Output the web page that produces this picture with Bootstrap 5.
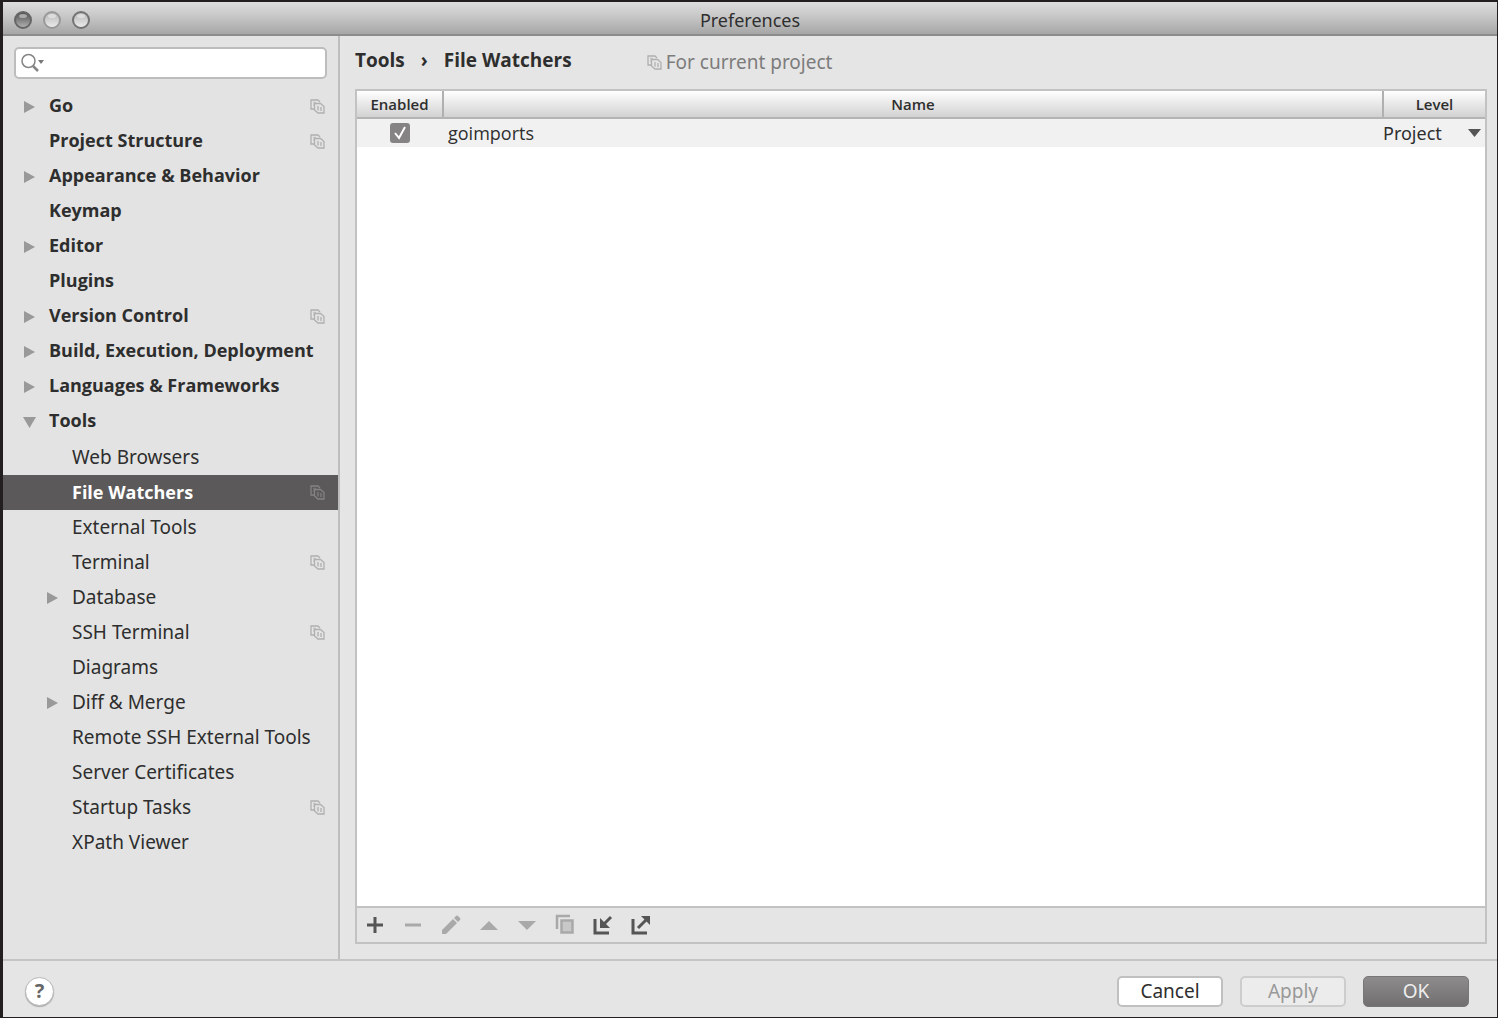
<!DOCTYPE html>
<html lang="en">
<head>
<meta charset="utf-8">
<meta name="viewport" content="width=device-width, initial-scale=1">
<title>Preferences</title>
<link href="https://cdn.jsdelivr.net/npm/bootstrap@5.3.0/dist/css/bootstrap.min.css" rel="stylesheet">
<style>
  body { font-family: "Noto Sans", "Open Sans", sans-serif; font-size: 19px; font-weight: 400; line-height: 24px; color: #2e2e2e; background: #e5e5e5; }
  button, input, select { font: inherit; color: inherit; }
  svg { display: block; flex: none; }
  .prefs-window { min-height: 100vh; border: solid #231f20; border-width: 2px 1px 1px 3px; }
  .title-bar { height: 34px; padding: 3px 10px 0; background: linear-gradient(#dedede, #c4c4c4 50%, #a6a6a6); border-bottom: 2px solid #8c8c8c; }
  .title-bar h1 { font-size: 18px; line-height: 24px; font-weight: 400; }
  .title-side { flex: 1 1 0; gap: 9px; }
  .light { width: 20px; height: 20px; border: 0; padding: 0; background: none; }
  .sidebar { width: 337px; border-right: 2px solid #bebebe; padding-top: 11px; background: #e3e3e3; }
  .search-box { height: 32px; margin: 0 11px 11px 11px; padding: 0 5px; background: #fff; border: 2px solid #bdbdbd; border-radius: 5px; }
  .search-box input { border: 0; outline: 0; background: transparent; min-width: 0; }
  .tree-row { height: 35px; padding: 0 13px 0 20px; color: inherit; text-decoration: none; }
  .tree-row .twisty { width: 14px; margin-right: 12px; }
  .tree-label { padding-bottom: 2px; }
  .tree-row.top-level { font-family: "Open Sans", sans-serif; font-size: 18px; font-weight: 700; padding-bottom: 2px; }
  .top-level .tree-label { padding-bottom: 4px; }
  .tree-row.nested { padding-left: 43px; }
  .tree-row.selected { background: #5b595a; color: #fff; font-family: "Open Sans", sans-serif; font-size: 18px; font-weight: 700; }
  .scope { color: #b0b0b0; }
  .selected .scope { color: #858384; }
  .pane { padding: 12px 10px 15px 15px; }
  .crumbs { height: 30px; margin-bottom: 11px; font-family: "Open Sans", sans-serif; font-weight: 700; color: #2e2e2e; }
  .crumbs a { color: inherit; text-decoration: none; }
  .crumb-sep { margin: 0 16px; }
  .for-project { margin-left: 75px; height: 28px; font-family: "Noto Sans", sans-serif; font-weight: 400; color: #7c7c7c; gap: 4px; }
  .watchers { border: 2px solid #c2c2c2; }
  .grid-head th { height: 27px; padding: 0; font-family: "Open Sans", sans-serif; font-size: 15px; line-height: 20px; font-weight: 600; text-align: center; border-right: 2px solid #b0b0b0; border-bottom: 2px solid #b4b4b4; background: linear-gradient(#fff, #e8e8e8 50%, #d2d2d2); }
  .grid-head th:last-child { border-right: 0; }
  .grid-table { table-layout: fixed; }
  .grid-table td { height: 29px; padding: 0; background: #f1f1f1; }
  .grid-table .watcher-name { padding-left: 5px; font-family: "Open Sans", sans-serif; font-size: 18px; }
  .col-enabled { width: 86px; }
  .col-level { width: 102px; }
  .grid-table .check { appearance: none; width: 20px; height: 20px; margin: 0; border-radius: 3px; background: #858384; display: block; }
  .check-wrap { position: relative; width: 20px; margin: 0 auto; }
  .check-wrap svg { position: absolute; inset: 0; pointer-events: none; }
  .level-select { appearance: none; border: 0; padding: 0; background: transparent; min-width: 0; font-size: 18px; }
  .tool-strip { height: 36px; padding: 0 6px; border-top: 2px solid #c2c2c2; background: #e5e5e5; gap: 14px; }
  .tool-strip button { width: 24px; height: 24px; padding: 0; border: 0; background: none; color: #555; }
  .tool-strip button:disabled { color: #a9a9a9; }
  .foot { height: 58px; padding: 4px 28px 0 22px; border-top: 2px solid #c4c4c4; gap: 17px; }
  .help { width: 29px; height: 29px; padding: 0; border-radius: 50%; border: 1px solid #b8b8b8; background: #fff; color: #666; font-weight: 700; font-size: 20px; line-height: 24px; box-shadow: 0 1px 1px #aaa; }
  .dialog-btn { width: 106px; height: 31px; padding: 0; line-height: 24px; border: 2px solid #c0c0c0; border-radius: 5px; background: #fff; }
  .dialog-btn:disabled { color: #999; background: #ececec; border-color: #cdcdcd; opacity: 1; }
  .dialog-btn.primary { color: #eee; border: 1px solid #777; background: linear-gradient(#8d8b8c, #716f70); }
</style>
<script src="https://cdn.jsdelivr.net/npm/bootstrap@5.3.0/dist/js/bootstrap.bundle.min.js"></script>
</head>
<body>
<svg class="position-absolute" width="0" height="0" aria-hidden="true">
  <defs>
    <linearGradient id="darkLight" x2="0" y2="1"><stop stop-color="#4c4c4c"/><stop offset="1" stop-color="#b5b5b5"/></linearGradient>
    <linearGradient id="paleLight" x2="0" y2="1"><stop stop-color="#b4b4b4"/><stop offset="1" stop-color="#eee"/></linearGradient>
  </defs>
  <symbol id="right" viewBox="0 0 14 14"><path d="M1 1v12l11-6z" fill="#999"/></symbol>
  <symbol id="down" viewBox="0 0 14 14"><path d="M0 2h13L6.500 13z" fill="#999"/></symbol>
  <symbol id="scope" viewBox="0 0 15 15"><g fill="none" stroke="currentColor" stroke-width="1.300"><path d="M4 10H1V1h7l2 2"/><path d="M3 3.500h3M3 6h1" opacity=".6"/><path d="M4.500 4.500h6l3.500 3V14H8l-3.500-3z"/><path d="M8 7v4.500M11 8v4"/></g></symbol>
</svg>
<div class="prefs-window d-flex flex-column">
  <header class="title-bar d-flex align-items-center">
    <div class="title-side d-flex">
      <button class="light" aria-label="Close"><svg width="20" height="20"><circle cx="10" cy="10" r="8" fill="url(#darkLight)" stroke="#666" stroke-width="2"/><ellipse cx="10" cy="6" rx="4" ry="2" fill="#aaa"/></svg></button>
      <button class="light" aria-label="Minimize"><svg width="20" height="20"><circle cx="10" cy="10" r="8" fill="url(#paleLight)" stroke="#999" stroke-width="2"/><ellipse cx="10" cy="6" rx="4" ry="2" fill="#ddd"/></svg></button>
      <button class="light" aria-label="Zoom"><svg width="20" height="20"><circle cx="10" cy="10" r="8" fill="url(#paleLight)" stroke="#737373" stroke-width="2"/><ellipse cx="10" cy="6" rx="4" ry="2" fill="#ddd"/></svg></button>
    </div>
    <h1 class="m-0">Preferences</h1>
    <div class="title-side"></div>
  </header>

  <div class="d-flex flex-grow-1">
    <aside class="sidebar flex-shrink-0">
      <div class="search-box d-flex align-items-center">
        <svg width="24" height="20" fill="none" stroke="#858585"><circle cx="7.500" cy="8" r="6.500" stroke-width="1.500"/><path d="M12 13l5 5" stroke-width="2.500"/><path d="M17 7h6l-3 4z" fill="#777" stroke="none"/></svg>
        <input type="text" class="flex-grow-1" aria-label="Search">
      </div>
      <nav>
        <a href="#" class="tree-row top-level d-flex align-items-center"><span class="twisty"><svg width="14" height="14"><use href="#right"/></svg></span><span class="tree-label flex-grow-1">Go</span><svg class="scope" width="15" height="15"><use href="#scope"/></svg></a>
        <a href="#" class="tree-row top-level d-flex align-items-center"><span class="twisty"></span><span class="tree-label flex-grow-1">Project Structure</span><svg class="scope" width="15" height="15"><use href="#scope"/></svg></a>
        <a href="#" class="tree-row top-level d-flex align-items-center"><span class="twisty"><svg width="14" height="14"><use href="#right"/></svg></span><span class="tree-label">Appearance &amp; Behavior</span></a>
        <a href="#" class="tree-row top-level d-flex align-items-center"><span class="twisty"></span><span class="tree-label">Keymap</span></a>
        <a href="#" class="tree-row top-level d-flex align-items-center"><span class="twisty"><svg width="14" height="14"><use href="#right"/></svg></span><span class="tree-label">Editor</span></a>
        <a href="#" class="tree-row top-level d-flex align-items-center"><span class="twisty"></span><span class="tree-label">Plugins</span></a>
        <a href="#" class="tree-row top-level d-flex align-items-center"><span class="twisty"><svg width="14" height="14"><use href="#right"/></svg></span><span class="tree-label flex-grow-1">Version Control</span><svg class="scope" width="15" height="15"><use href="#scope"/></svg></a>
        <a href="#" class="tree-row top-level d-flex align-items-center"><span class="twisty"><svg width="14" height="14"><use href="#right"/></svg></span><span class="tree-label text-nowrap">Build, Execution, Deployment</span></a>
        <a href="#" class="tree-row top-level d-flex align-items-center"><span class="twisty"><svg width="14" height="14"><use href="#right"/></svg></span><span class="tree-label">Languages &amp; Frameworks</span></a>
        <a href="#" class="tree-row top-level d-flex align-items-center"><span class="twisty"><svg width="14" height="14"><use href="#down"/></svg></span><span class="tree-label">Tools</span></a>
        <a href="#" class="tree-row nested d-flex align-items-center"><span class="twisty"></span><span class="tree-label">Web Browsers</span></a>
        <a href="#" class="tree-row nested selected d-flex align-items-center" aria-current="page"><span class="twisty"></span><span class="tree-label flex-grow-1">File Watchers</span><svg class="scope" width="15" height="15"><use href="#scope"/></svg></a>
        <a href="#" class="tree-row nested d-flex align-items-center"><span class="twisty"></span><span class="tree-label">External Tools</span></a>
        <a href="#" class="tree-row nested d-flex align-items-center"><span class="twisty"></span><span class="tree-label flex-grow-1">Terminal</span><svg class="scope" width="15" height="15"><use href="#scope"/></svg></a>
        <a href="#" class="tree-row nested d-flex align-items-center"><span class="twisty"><svg width="14" height="14"><use href="#right"/></svg></span><span class="tree-label">Database</span></a>
        <a href="#" class="tree-row nested d-flex align-items-center"><span class="twisty"></span><span class="tree-label flex-grow-1">SSH Terminal</span><svg class="scope" width="15" height="15"><use href="#scope"/></svg></a>
        <a href="#" class="tree-row nested d-flex align-items-center"><span class="twisty"></span><span class="tree-label">Diagrams</span></a>
        <a href="#" class="tree-row nested d-flex align-items-center"><span class="twisty"><svg width="14" height="14"><use href="#right"/></svg></span><span class="tree-label">Diff &amp; Merge</span></a>
        <a href="#" class="tree-row nested d-flex align-items-center"><span class="twisty"></span><span class="tree-label text-nowrap">Remote SSH External Tools</span></a>
        <a href="#" class="tree-row nested d-flex align-items-center"><span class="twisty"></span><span class="tree-label">Server Certificates</span></a>
        <a href="#" class="tree-row nested d-flex align-items-center"><span class="twisty"></span><span class="tree-label flex-grow-1">Startup Tasks</span><svg class="scope" width="15" height="15"><use href="#scope"/></svg></a>
        <a href="#" class="tree-row nested d-flex align-items-center"><span class="twisty"></span><span class="tree-label">XPath Viewer</span></a>
      </nav>
    </aside>

    <main class="pane d-flex flex-column flex-grow-1">
      <div class="crumbs d-flex">
        <a href="#">Tools</a><span class="crumb-sep">›</span><span>File Watchers</span>
        <span class="for-project d-flex align-items-center"><svg class="scope" width="15" height="15"><use href="#scope"/></svg>For current project</span>
      </div>
      <section class="watchers d-flex flex-column flex-grow-1 bg-white">
        <table class="grid-table w-100">
          <colgroup><col class="col-enabled"><col><col class="col-level"></colgroup>
          <thead><tr class="grid-head"><th scope="col">Enabled</th><th scope="col">Name</th><th scope="col">Level</th></tr></thead>
          <tbody><tr>
            <td><div class="check-wrap"><input type="checkbox" class="check" checked aria-label="Enable goimports"><svg width="20" height="20" fill="none" stroke="#fff" stroke-width="2"><path d="M5 10l4 5 6-11"/></svg></div></td>
            <td class="watcher-name">goimports</td>
            <td><div class="d-flex align-items-center pe-1"><select class="level-select flex-grow-1" aria-label="Level"><option>Project</option></select><svg width="13" height="8"><path d="M0 0h13L6.500 8z" fill="#555"/></svg></div></td>
          </tr></tbody>
        </table>
        <div class="tool-strip d-flex align-items-center mt-auto">
          <button aria-label="Add"><svg width="24" height="24" stroke="currentColor" stroke-width="3"><path d="M4 12h16M12 4v16"/></svg></button>
          <button disabled aria-label="Remove"><svg width="24" height="24" stroke="currentColor" stroke-width="3"><path d="M4 12h16"/></svg></button>
          <button disabled aria-label="Edit"><svg width="24" height="24" fill="currentColor"><path d="M3 17L14 6l4 4L7 21H3zM15 5l2-2q1-1 2 0l2 2q1 1 0 2l-2 2z"/></svg></button>
          <button disabled aria-label="Move up"><svg width="24" height="24" fill="currentColor"><path d="M3 17h18l-9-9z"/></svg></button>
          <button disabled aria-label="Move down"><svg width="24" height="24" fill="currentColor"><path d="M3 8h18l-9 9z"/></svg></button>
          <button disabled aria-label="Copy"><svg width="24" height="24" fill="none" stroke="currentColor"><path d="M4 16V3h13" stroke-width="2.500"/><rect x="8.500" y="7.500" width="11" height="12" fill="#c8c8c8" stroke-width="2.500"/></svg></button>
          <button aria-label="Import"><svg width="24" height="24" fill="none" stroke="currentColor" stroke-width="3"><path d="M4 6v14h14M20 4l-8 8"/><path d="M9 5v10h10z" fill="currentColor" stroke="none"/></svg></button>
          <button aria-label="Export"><svg width="24" height="24" fill="none" stroke="currentColor" stroke-width="3"><path d="M4 6v14h14M9 15l9-9"/><path d="M12 3h9v9z" fill="currentColor" stroke="none"/></svg></button>
        </div>
      </section>
    </main>
  </div>

  <footer class="foot d-flex align-items-center">
    <button class="help me-auto" aria-label="Help">?</button>
    <button class="dialog-btn">Cancel</button>
    <button class="dialog-btn" disabled>Apply</button>
    <button class="dialog-btn primary">OK</button>
  </footer>
</div>
</body>
</html>
